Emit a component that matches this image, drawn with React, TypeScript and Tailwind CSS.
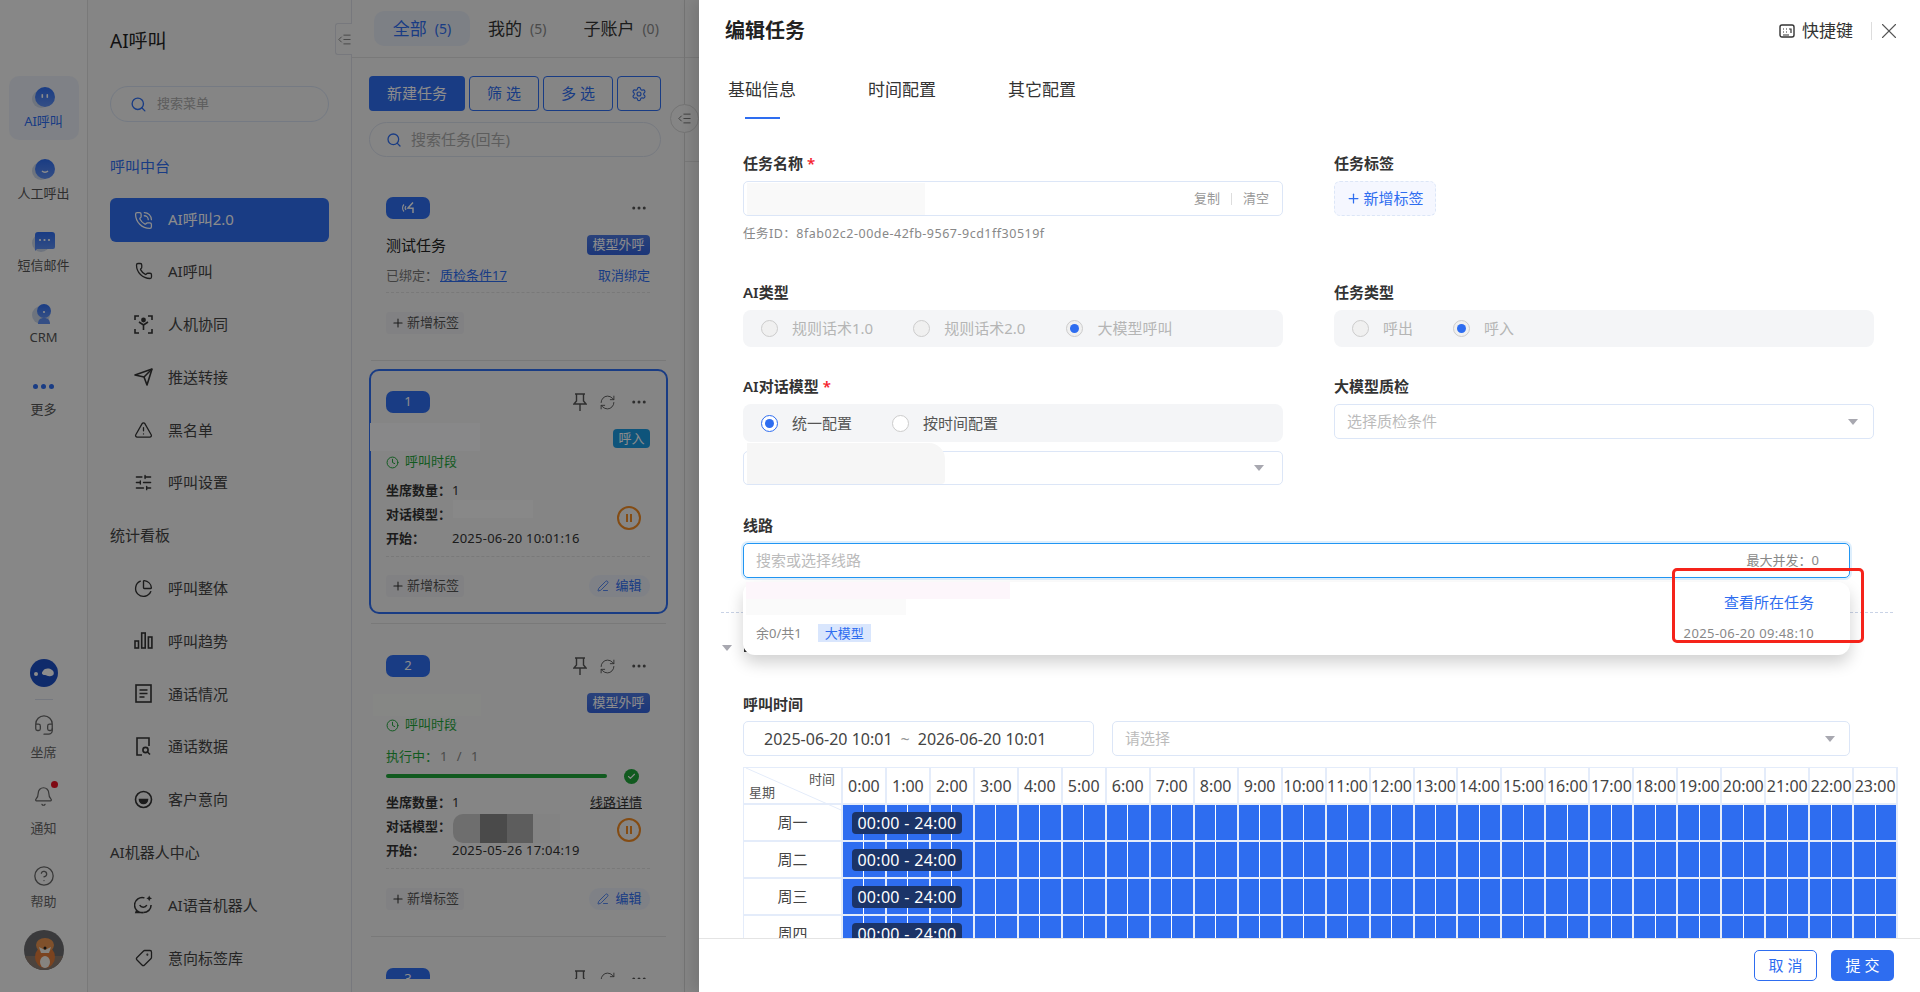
import type { ReactNode } from 'react';
import { Search, PhoneCall, Phone, TriangleAlert, SlidersHorizontal, ChartPie, Tag, Settings, RefreshCw, Ellipsis, Plus, Clock, PenLine, Check, X, Headset, Bell, CircleHelp, IndentDecrease } from 'lucide-react';

const blue = 'bg-[#2e6df0]';

function FaceIcon({ kind }: { kind: string }) {
  return (
    <svg width="24" height="24" viewBox="0 0 24 24">
      <defs>
        <linearGradient id={'g' + kind} x1="0" y1="0" x2="0" y2="1">
          <stop offset="0" stopColor="#2e6df0" />
          <stop offset="1" stopColor="#5f8ff2" />
        </linearGradient>
      </defs>
      <circle cx="9" cy="13" r="9" fill="#c9d3e6" />
      {kind === 'msg' ? (
        <>
          <path d="M3 5a3 3 0 0 1 3-3h14a3 3 0 0 1 3 3v12a2 2 0 0 1-2 2H5l-2 2z" fill={'url(#g' + kind + ')'} />
          <circle cx="8" cy="10" r="1.1" fill="#fff" />
          <circle cx="12.5" cy="10" r="1.1" fill="#fff" />
          <circle cx="17" cy="10" r="1.1" fill="#fff" />
        </>
      ) : kind === 'crm' ? (
        <>
          <circle cx="12" cy="9" r="7" fill={'url(#g' + kind + ')'} />
          <path d="M6 22c0-4 2-6 6-6s6 2 6 6z" fill="#5f8ff2" />
          <circle cx="12" cy="10" r="1.1" fill="#fff" />
        </>
      ) : (
        <>
          <circle cx="13" cy="11" r="10" fill={'url(#g' + kind + ')'} />
          {kind === 'ai' ? (
            <>
              <rect x="9.5" y="8" width="1.6" height="4" rx="0.8" fill="#fff" />
              <rect x="14.5" y="8" width="1.6" height="4" rx="0.8" fill="#fff" />
            </>
          ) : (
            <path d="M10 13c1.5 1.6 4.5 1.6 6 0" stroke="#fff" strokeWidth="1.4" fill="none" />
          )}
        </>
      )}
    </svg>
  );
}

function RailItem({ kind, label, active }: { kind: string; label: string; active?: boolean }) {
  return (
    <div className={'w-[70px] h-[64px] rounded-[10px] flex flex-col items-center pt-[10px] ' + (active ? 'bg-[#e8ecf4]' : '')}>
      {kind === 'more' ? (
        <div className="h-[24px] flex items-center gap-[3px]">
          <span className="w-[5px] h-[5px] rounded-full bg-[#2e6df0]" />
          <span className="w-[5px] h-[5px] rounded-full bg-[#2e6df0]" />
          <span className="w-[5px] h-[5px] rounded-full bg-[#2e6df0]" />
        </div>
      ) : (
        <FaceIcon kind={kind} />
      )}
      <span className={'mt-[1px] text-[13px] leading-[20px] ' + (active ? 'text-[#2e6df0]' : 'text-[#555]')}>{label}</span>
    </div>
  );
}

function Rail() {
  return (
    <div className="w-[88px] shrink-0 h-full bg-[#f6f6f6] border-r border-[#dcdcdc] flex flex-col items-center justify-between pt-[76px] pb-[22px]">
      <div className="flex flex-col gap-[8px]">
        <RailItem kind="ai" label="AI呼叫" active />
        <RailItem kind="human" label="人工呼出" />
        <RailItem kind="msg" label="短信邮件" />
        <RailItem kind="crm" label="CRM" />
        <RailItem kind="more" label="更多" />
      </div>
      <div className="flex flex-col items-center text-[13px] leading-[16px] text-[#666]">
        <svg width="28" height="28" viewBox="0 0 28 28">
          <circle cx="14" cy="14" r="14" fill="#1d4fc4" />
          <path d="M13 12c2-3 6-3 9-1 3 2 2 6-1 6-3 1-4-1-6-1-3 0-4-2-2-4z" fill="#fff" />
          <circle cx="6" cy="15" r="2" fill="#fff" />
        </svg>
        <div className="mt-[12px] w-[18px] h-px bg-[#d5dbe8]" />
        <Headset size={22} strokeWidth={1.4} className="mt-[14px] text-[#666]" />
        <span className="mt-[8px]">坐席</span>
        <div className="relative mt-[26px]">
          <Bell size={21} strokeWidth={1.4} className="text-[#666]" />
          <span className="absolute -top-[5px] -right-[4px] w-[7px] h-[7px] rounded-full bg-[#e81123]" />
        </div>
        <span className="mt-[13px]">通知</span>
        <CircleHelp size={22} strokeWidth={1.4} className="mt-[29px] text-[#666]" />
        <span className="mt-[6px]">帮助</span>
        <svg width="40" height="40" viewBox="0 0 40 40" className="mt-[21px]">
          <clipPath id="av"><circle cx="20" cy="20" r="20" /></clipPath>
          <g clipPath="url(#av)">
            <rect width="40" height="40" fill="#6b6b6e" />
            <rect y="26" width="40" height="14" fill="#8a7a70" />
            <ellipse cx="21" cy="27" rx="10" ry="11" fill="#e07a3a" />
            <ellipse cx="21" cy="15" rx="9" ry="7" fill="#e8934f" />
            <path d="M15 17l6 3 6-3-2 6h-8z" fill="#f5f1ea" />
            <ellipse cx="21" cy="32" rx="5" ry="6" fill="#f5f1ea" />
            <circle cx="21" cy="18" r="1.5" fill="#222" />
          </g>
        </svg>
      </div>
    </div>
  );
}

function ScanUser() {
  return (
    <svg width="19" height="19" viewBox="0 0 19 19" fill="none" stroke="currentColor" strokeWidth="1.6">
      <path d="M1 5V1h4M14 1h4v4M18 14v4h-4M5 18H1v-4" />
      <circle cx="9.5" cy="5" r="1.6" fill="currentColor" />
      <path d="M5 7l4.5 3L14 7M9.5 10v5" />
    </svg>
  );
}

function SendIcon() {
  return (
    <svg width="19" height="19" viewBox="0 0 19 19" fill="none" stroke="currentColor" strokeWidth="1.6" strokeLinejoin="round">
      <path d="M1 8l17-6-5 16-3-8z" />
      <path d="M10 10l8-8" />
    </svg>
  );
}

function BarsIcon() {
  return (
    <svg width="19" height="19" viewBox="0 0 19 19" fill="none" stroke="currentColor" strokeWidth="1.6">
      <rect x="1" y="10" width="3.5" height="7" />
      <rect x="7.7" y="2" width="3.5" height="15" />
      <rect x="14.4" y="6" width="3.5" height="11" />
    </svg>
  );
}

function DocIcon() {
  return (
    <svg width="19" height="19" viewBox="0 0 19 19" fill="none" stroke="currentColor" strokeWidth="1.6">
      <rect x="2" y="1" width="15" height="17" />
      <path d="M5.5 6h8M5.5 9.5h8M5.5 13h5" />
    </svg>
  );
}

function DocSearchIcon() {
  return (
    <svg width="19" height="19" viewBox="0 0 19 19" fill="none" stroke="currentColor" strokeWidth="1.6">
      <path d="M8 18H3V1h12v8" />
      <circle cx="11.5" cy="13" r="2.6" />
      <path d="M13.5 15l2.5 2.5" />
    </svg>
  );
}

function IntentIcon() {
  return (
    <svg width="19" height="19" viewBox="0 0 19 19" fill="none" stroke="currentColor" strokeWidth="1.6">
      <circle cx="9.5" cy="9.5" r="8" />
      <path d="M5.5 9.5h8a4 4 0 0 1-8 0z" fill="currentColor" />
    </svg>
  );
}

function BotChatIcon() {
  return (
    <svg width="20" height="20" viewBox="0 0 20 20" fill="none" stroke="currentColor" strokeWidth="1.6">
      <path d="M11 2.5A8 8 0 1 0 10 18H2l1-3" />
      <path d="M18 10a8 8 0 0 1-8 8" />
      <path d="M6 10c1.5 3 6 3 7.5 0" />
      <path d="M16 0l1 2 2 1-2 1-1 2-1-2-2-1 2-1z" fill="currentColor" stroke="none" />
    </svg>
  );
}

function PinIcon() {
  return (
    <svg width="14" height="19" viewBox="0 0 14 19" fill="none" stroke="currentColor" strokeWidth="1.4">
      <path d="M2 1h10M3.5 1v7L1 11h12l-2.5-3V1M7 11v7" />
    </svg>
  );
}

function SignalIcon() {
  return (
    <svg width="14" height="14" viewBox="0 0 14 14" fill="none" stroke="#fff" strokeWidth="1.1">
      <path d="M3 3.5a5 5 0 0 0 0 7M5 5a3 3 0 0 0 0 4" />
      <path d="M12 1.5L7 7l5 .2V12" strokeWidth="1.5" />
    </svg>
  );
}

function MenuRow({ icon, label }: { icon: ReactNode; label: string }) {
  return (
    <div className="h-[52.8px] flex items-center pl-[24px]">
      <span className="w-[19px] h-[20px] flex items-center justify-center text-[#333]">{icon}</span>
      <span className="ml-[15px] text-[15px] text-[#444]">{label}</span>
    </div>
  );
}

function MenuPanel() {
  return (
    <div className="relative w-[264px] shrink-0 h-full bg-[#f2f2f2] border-r border-[#d9dbe3] pl-[22px] pr-[22px] pt-[27px]">
      <div className="text-[19px] leading-[28px] text-[#222]">AI呼叫</div>
      <div className="mt-[31px] h-[36px] rounded-full border border-[#d5dfef] flex items-center pl-[19px] gap-[10px]">
        <Search size={17} strokeWidth={1.9} className="text-[#2e6df0]" />
        <span className="text-[13px] text-[#aaa]">搜索菜单</span>
      </div>
      <div className="mt-[34px] text-[15px] leading-[20px] text-[#2e6df0]">呼叫中台</div>
      <div className={'mt-[22px] h-[44px] rounded-[6px] flex items-center pl-[24px] text-white ' + blue}>
        <PhoneCall size={19} strokeWidth={1.6} />
        <span className="ml-[15px] mb-[2px] text-[15px]">AI呼叫2.0</span>
      </div>
      <div className="mt-[3px]">
        <MenuRow icon={<Phone size={18} strokeWidth={1.7} />} label="AI呼叫" />
        <MenuRow icon={<ScanUser />} label="人机协同" />
        <MenuRow icon={<SendIcon />} label="推送转接" />
        <MenuRow icon={<TriangleAlert size={20} strokeWidth={1.6} />} label="黑名单" />
        <MenuRow icon={<SlidersHorizontal size={19} strokeWidth={1.7} />} label="呼叫设置" />
        <div className="h-[52.8px] flex items-center text-[15px] text-[#444]">统计看板</div>
        <MenuRow icon={<ChartPie size={19} strokeWidth={1.7} />} label="呼叫整体" />
        <MenuRow icon={<BarsIcon />} label="呼叫趋势" />
        <MenuRow icon={<DocIcon />} label="通话情况" />
        <MenuRow icon={<DocSearchIcon />} label="通话数据" />
        <MenuRow icon={<IntentIcon />} label="客户意向" />
        <div className="h-[52.8px] flex items-center text-[15px] text-[#444]">AI机器人中心</div>
        <MenuRow icon={<BotChatIcon />} label="AI语音机器人" />
        <MenuRow icon={<Tag size={18} strokeWidth={1.7} className="rotate-90" />} label="意向标签库" />
      </div>
      <div className="absolute right-[-1px] top-[23px] w-[17px] h-[32px] bg-[#f2f2f2] border border-r-0 border-[#d9dbe3] rounded-l-[3px] flex items-center justify-center text-[#777]">
        <IndentDecrease size={15} strokeWidth={1.4} />
      </div>
    </div>
  );
}

function CardTop({ badge, full }: { badge: ReactNode; full?: boolean }) {
  return (
    <div className="flex items-center justify-between h-[22px]">
      <div className={'w-[44px] h-[22px] rounded-[7px] flex items-center justify-center text-white text-[13px] ' + blue}>{badge}</div>
      <div className="flex items-center gap-[12px] pr-[2px] text-[#555]">
        {full && <PinIcon />}
        {full && <RefreshCw size={17} strokeWidth={1.3} />}
        <Ellipsis size={18} strokeWidth={2} className="ml-[2px]" />
      </div>
    </div>
  );
}

function AddTag() {
  return (
    <div className="h-[22px] w-[78px] rounded-[3px] bg-[#ececee] flex items-center justify-center gap-[2px] text-[13px] text-[#555]">
      <Plus size={14} strokeWidth={1.8} className="text-[#333]" />
      <span>新增标签</span>
    </div>
  );
}

function CardFoot({ edit }: { edit?: boolean }) {
  return (
    <div className="flex items-center justify-between">
      <AddTag />
      {edit && (
        <div className="h-[22px] w-[61px] rounded-full bg-[#e8ecf5] flex items-center justify-center gap-[6px] text-[13px] text-[#2e6df0]">
          <PenLine size={12} strokeWidth={1.6} />
          <span>编辑</span>
        </div>
      )}
    </div>
  );
}

function InfoRows({ date, right }: { date: string; right?: boolean }) {
  return (
    <div className="relative text-[13px] leading-[24px] text-[#333]">
      <div className="flex justify-between pr-[8px]">
        <div className="flex"><span className="w-[66px] font-semibold">坐席数量：</span><span>1</span></div>
        {right && <span className="underline">线路详情</span>}
      </div>
      <div className="flex"><span className="w-[66px] font-semibold">对话模型：</span></div>
      <div className="flex"><span className="w-[66px] font-semibold">开始：</span><span className="tracking-[0.25px]">{date}</span></div>
      <div className="absolute right-[9px] top-[28px] w-[24px] h-[24px] rounded-full border-2 border-[#f08a24] flex items-center justify-center gap-[2px]">
        <span className="w-[2px] h-[8px] bg-[#f08a24]" />
        <span className="w-[2px] h-[8px] bg-[#f08a24]" />
      </div>
    </div>
  );
}

function TimeSlot() {
  return (
    <div className="flex items-center gap-[6px] h-[18px] text-[13px] text-[#1fa53a]">
      <Clock size={13} strokeWidth={1.8} />
      <span>呼叫时段</span>
    </div>
  );
}

function TaskTag({ label, cyan }: { label: string; cyan?: boolean }) {
  return (
    <div className={'rounded-[4px] flex items-center justify-center text-white text-[13px] ' + (cyan ? 'w-[37px] h-[19px] bg-[#1a9ae0]' : 'w-[63px] h-[20px] bg-gradient-to-b from-[#4c78e0] to-[#3463dc]')}>{label}</div>
  );
}

function Dashed({ className }: { className: string }) {
  return <div className={'border-t border-dashed border-[#dcdcdc] ' + className} />;
}

function TaskColumn() {
  return (
    <div className="relative w-[333px] shrink-0 h-full flex flex-col bg-[#f2f2f2] border-r border-[#d4d4d4]">
      <div className="h-[58px] shrink-0 border-b border-[#dcdcdc] pl-[22px] pt-[11px] flex items-start">
        <div className="w-[96px] h-[35px] rounded-[10px] bg-[#e4e9f3] flex items-center justify-center gap-[8px] text-[#2e6df0]">
          <span className="text-[17px]">全部</span><span className="text-[14px]">(5)</span>
        </div>
        <div className="h-[35px] flex items-center pl-[18px] gap-[8px] text-[#333]">
          <span className="text-[17px]">我的</span><span className="text-[14px] text-[#888]">(5)</span>
        </div>
        <div className="h-[35px] flex items-center pl-[37px] gap-[8px] text-[#333]">
          <span className="text-[17px]">子账户</span><span className="text-[14px] text-[#888]">(0)</span>
        </div>
      </div>
      <div className="h-[921px] overflow-hidden pl-[17px] relative">
        <div className="mt-[18px] flex gap-[4px] text-[15px]">
          <div className={'w-[96px] h-[35px] rounded-[4px] flex items-center justify-center text-white ' + blue}>新建任务</div>
          <div className="w-[70px] h-[35px] rounded-[4px] border border-[#2e6df0] flex items-center justify-center text-[#2e6df0]">筛 选</div>
          <div className="w-[70px] h-[35px] rounded-[4px] border border-[#2e6df0] flex items-center justify-center text-[#2e6df0]">多 选</div>
          <div className="w-[44px] h-[35px] rounded-[4px] border border-[#2e6df0] flex items-center justify-center text-[#2e6df0]"><Settings size={16} strokeWidth={1.7} /></div>
        </div>
        <div className="mt-[11px] w-[292px] h-[35px] rounded-full border border-[#d8deea] flex items-center pl-[16px] gap-[9px]">
          <Search size={16} strokeWidth={1.9} className="text-[#2e6df0]" />
          <span className="text-[15px] text-[#aaa]">搜索任务(回车)</span>
        </div>
        <div className="mt-[17px] w-[299px] border-2 border-transparent pl-[15px] pr-[16px] pt-[21px] pb-[15px]">
          <CardTop badge={<SignalIcon />} />
          <div className="mt-[16px] h-[20px] flex items-center justify-between">
            <span className="text-[15px] text-[#222]">测试任务</span>
            <TaskTag label="模型外呼" />
          </div>
          <div className="mt-[11px] h-[20px] flex items-center justify-between text-[13px]">
            <div><span className="text-[#777]">已绑定：</span><span className="ml-[2px] text-[#2e6df0] underline">质检条件17</span></div>
            <span className="text-[#2e6df0]">取消绑定</span>
          </div>
          <Dashed className="mt-[6px]" />
          <div className="mt-[19px]"><CardFoot /></div>
        </div>
        <div className="mt-[9px] ml-[2px] w-[295px] h-px bg-[#dcdcdc]" />
        <div className="relative mt-[8px] w-[299px] rounded-[10px] border-2 border-[#2e6df0] pl-[15px] pr-[16px] pt-[20px] pb-[15px]">
          <CardTop badge="1" full />
          <div className="mt-[16px] flex justify-end"><TaskTag label="呼入" cyan /></div>
          <div className="absolute -left-[1px] top-[52px] w-[110px] h-[28px] bg-[#f7f7fa]" />
          <div className="mt-[5px]"><TimeSlot /></div>
          <div className="mt-[7px]"><InfoRows date="2025-06-20 10:01:16" /></div>
          <div className="absolute left-[82px] top-[129px] w-[80px] h-[18px] bg-[#f8f8f8]" />
          <Dashed className="mt-[6px]" />
          <div className="mt-[18px]"><CardFoot edit /></div>
        </div>
        <div className="mt-[9px] ml-[2px] w-[295px] h-px bg-[#dcdcdc]" />
        <div className="relative mt-[8px] w-[299px] border-2 border-transparent pl-[15px] pr-[16px] pt-[21px] pb-[15px]">
          <CardTop badge="2" full />
          <div className="mt-[16px] flex justify-end"><TaskTag label="模型外呼" /></div>
          <div className="absolute left-[2px] top-[60px] w-[108px] h-[22px] bg-[#f4f6f3]" />
          <div className="mt-[3px]"><TimeSlot /></div>
          <div className="mt-[14px] h-[18px] flex items-center text-[13px] text-[#1fa53a]">执行中：<span className="ml-[2px] text-[#888] tracking-[3px]">1 / 1</span></div>
          <div className="mt-[2px] h-[16px] flex items-center">
            <div className="w-[221px] h-[4px] rounded-full bg-[#1fa53a]" />
            <div className="ml-[17px] w-[15px] h-[15px] rounded-full bg-[#1fa53a] flex items-center justify-center text-white"><Check size={9} strokeWidth={3} /></div>
          </div>
          <div className="mt-[6px]"><InfoRows date="2025-05-26 17:04:19" right /></div>
          <div className="absolute left-[82px] top-[180px] h-[29px] flex rounded-l-[10px] overflow-hidden">
            <span className="w-[27px] bg-[#c8c8c8]" />
            <span className="w-[27px] bg-[#888]" />
            <span className="w-[26px] bg-[#aaa]" />
            <span className="w-[27px] bg-[#eee]" />
          </div>
          <Dashed className="mt-[6px]" />
          <div className="mt-[19px]"><CardFoot edit /></div>
        </div>
        <div className="mt-[9px] ml-[2px] w-[295px] h-px bg-[#dcdcdc]" />
        <div className="mt-[8px] w-[299px] border-2 border-transparent pl-[15px] pr-[16px] pt-[21px]">
          <CardTop badge="3" full />
        </div>
      </div>
      <div className="absolute right-[-15px] top-[104px] w-[29px] h-[29px] rounded-full bg-[#f2f2f2] border border-[#d4d4d4] flex items-center justify-center text-[#666]">
        <IndentDecrease size={15} strokeWidth={1.4} />
      </div>
    </div>
  );
}

function Label({ text, star }: { text: string; star?: boolean }) {
  return (
    <div className="h-[20px] mb-[7px] pb-[2px] flex items-center text-[15px] font-semibold text-[#333]">
      {text}
      {star && <span className="ml-[4px] text-[#f5222d]">*</span>}
    </div>
  );
}

function Radio({ on, off, label, className }: { on?: boolean; off?: boolean; label: string; className?: string }) {
  return (
    <div className={'flex items-center gap-[14px] ' + (className || '')}>
      <span className={'w-[17px] h-[17px] rounded-full border-[1.5px] flex items-center justify-center ' + (off ? 'border-[#ccc] bg-[#f0f0f0]' : on ? 'border-[#2e6df0] bg-white' : 'border-[#ccc] bg-white')}>
        {on && <span className="w-[9px] h-[9px] rounded-full bg-[#2e6df0]" />}
      </span>
      <span className={off ? 'text-[#b5b5b5]' : 'text-[#555]'}>{label}</span>
    </div>
  );
}

function Caret() {
  return <span className="w-0 h-0 border-x-[5px] border-x-transparent border-t-[6px] border-t-[#a8a8b0]" />;
}

function Schedule() {
  const hours = Array.from({ length: 24 }, (_, i) => i);
  const rows = ['周一', '周二', '周三', '周四'];
  return (
    <div className="mt-[11px] w-[1155px] border-t border-l border-[#e4ecfa]">
      <div className="flex h-[37px]">
        <div className="relative w-[99px] border-r-2 border-b-2 border-[#e4ecfa] text-[13px] text-[#555]">
          <svg className="absolute left-0 top-0 overflow-visible" width="97" height="35"><line x1="2" y1="0" x2="97" y2="42" stroke="#e4ecfa" /></svg>
          <span className="absolute right-[6px] top-[2px]">时间</span>
          <span className="absolute left-[5px] bottom-[1px]">星期</span>
        </div>
        {hours.map(h => (
          <div key={h} className="w-[44px] border-r-2 border-b-2 border-[#e4ecfa] flex items-center justify-center text-[16px] text-[#444]">{h}:00</div>
        ))}
      </div>
      {rows.map(r => (
        <div key={r} className="relative flex h-[37px]">
          <div className="w-[99px] border-r-2 border-b-2 border-[#e4ecfa] flex items-center justify-center text-[15px] text-[#444]">{r}</div>
          {hours.map(h => (
            <div key={h} className="w-[44px] flex border-r-2 border-b-2 border-[#e4ecfa]">
              <div className="flex-1 bg-[#2e6df0] border-r border-white" />
              <div className="flex-1 bg-[#2e6df0]" />
            </div>
          ))}
          <div className="absolute left-[108px] top-[7px] w-[110px] h-[22px] rounded-[4px] bg-[#1b3468] flex items-center justify-center text-[16px] tracking-[0.3px] text-white">00:00 - 24:00</div>
        </div>
      ))}
    </div>
  );
}

function Drawer() {
  return (
    <div className="absolute right-0 top-0 bottom-0 w-[1221px] bg-white shadow-[-6px_0_14px_rgba(0,0,0,0.12)] flex flex-col">
      <div className="h-[939px] overflow-hidden border-b border-[#e4e4e4]">
        <div className="h-[62px] flex items-center justify-between pl-[26px] pr-[18px]">
          <span className="text-[20px] font-semibold text-[#222]">编辑任务</span>
          <div className="flex items-center text-[#333]">
            <svg width="16" height="16" viewBox="0 0 16 16" fill="none" stroke="currentColor" strokeWidth="1.4">
              <rect x="1" y="2" width="14" height="12" rx="2" />
              <path d="M4 6h1M7 6h1M10 6h2v4M4 9h1M7 9h1M4 12h6" strokeWidth="1.2" />
            </svg>
            <span className="ml-[7px] text-[17px]">快捷键</span>
            <span className="ml-[18px] w-px h-[18px] bg-[#ddd]" />
            <X size={26} strokeWidth={1} className="ml-[4px] text-[#555]" />
          </div>
        </div>
        <div className="mt-[16px] pl-[29px] flex gap-[72px] text-[17px] leading-[24px] text-[#333]">
          <div className="flex flex-col items-center">
            <span>基础信息</span>
            <span className="mt-[15px] w-[35px] h-[2px] bg-[#2e6df0]" />
          </div>
          <span>时间配置</span>
          <span>其它配置</span>
        </div>
        <div className="mt-[34px] pl-[44px]">
          <div className="grid grid-cols-[540px_540px] gap-x-[51px]">
            <div>
              <div className="h-[20px] mb-[8px] flex items-center text-[15px] font-semibold text-[#333]">任务名称<span className="ml-[4px] text-[#f5222d]">*</span></div>
              <div className="relative h-[35px] rounded-[5px] border border-[#dce6f7] flex items-center justify-end pr-[13px] text-[13px] text-[#999]">
                <div className="absolute left-[3px] top-[1px] w-[178px] h-[32px] bg-[#f9f9f9]" />
                复制<span className="mx-[11px] w-px h-[12px] bg-[#ddd]" />清空
              </div>
              <div className="mt-[9px] h-[18px] flex items-center text-[12.5px] text-[#888] tracking-[0.5px]">任务ID：8fab02c2-00de-42fb-9567-9cd1ff30519f</div>
            </div>
            <div>
              <div className="h-[20px] mb-[8px] flex items-center text-[15px] font-semibold text-[#333]">任务标签</div>
              <div className="w-[102px] h-[35px] rounded-[6px] border border-dashed border-[#dce6f7] bg-[#f5f7ff] flex items-center justify-center gap-[2px] text-[15px] text-[#2e6df0]">
                <Plus size={15} strokeWidth={2} />新增标签
              </div>
            </div>
            <div className="mt-[40px]">
              <Label text="AI类型" />
              <div className="h-[37px] rounded-[8px] bg-[#f4f5f7] flex items-center pl-[18px] text-[15px]">
                <Radio off label="规则话术1.0" />
                <Radio off label="规则话术2.0" className="ml-[40px]" />
                <Radio on off label="大模型呼叫" className="ml-[41px]" />
              </div>
            </div>
            <div className="mt-[40px]">
              <Label text="任务类型" />
              <div className="h-[37px] rounded-[8px] bg-[#f4f5f7] flex items-center pl-[18px] text-[15px]">
                <Radio off label="呼出" />
                <Radio on off label="呼入" className="ml-[40px]" />
              </div>
            </div>
            <div className="mt-[30px]">
              <Label text="AI对话模型" star />
              <div className="h-[38px] rounded-[8px] bg-[#f4f5f7] flex items-center pl-[18px] text-[15px]">
                <Radio on label="统一配置" />
                <Radio label="按时间配置" className="ml-[40px]" />
              </div>
              <div className="relative mt-[9px] h-[34px] rounded-[5px] border border-[#dce6f7] flex items-center justify-end pr-[18px]">
                <div className="absolute left-[3px] -top-[9px] w-[198px] h-[41px] rounded-tr-[16px] rounded-br-[4px] bg-[#f6f6f6]" />
                <Caret />
              </div>
            </div>
            <div className="mt-[30px]">
              <Label text="大模型质检" />
              <div className="h-[35px] rounded-[5px] border border-[#dce6f7] flex items-center justify-between pl-[12px] pr-[15px] text-[15px] text-[#bbb]">
                选择质检条件<Caret />
              </div>
            </div>
          </div>
          <div className="relative mt-[30px] w-[1107px]">
            <div className="h-[20px] mb-[8px] flex items-center text-[15px] font-semibold text-[#333]">线路</div>
            <div className="h-[35px] rounded-[5px] border border-[#2196f3] shadow-[0_0_0_2px_rgba(33,150,243,0.15)] flex items-center justify-between pl-[12px] pr-[30px]">
              <span className="text-[15px] text-[#bbb]">搜索或选择线路</span>
              <span className="text-[13px] text-[#888]">最大并发：0</span>
            </div>
            <div className="absolute left-0 right-0 top-[67px] h-[73px] z-10 rounded-[12px] bg-white shadow-[0_8px_16px_rgba(0,0,0,0.18)] flex flex-col justify-between pl-[13px] pr-[36px] pb-[12px] pt-[11px]">
              <div className="absolute left-[3px] top-0 w-[264px] h-[17px] bg-[#fdf6fb]" />
              <div className="absolute left-[3px] top-[17px] w-[160px] h-[16px] bg-[#fafafa]" />
              <div className="text-right text-[15px] leading-[18px] text-[#2e6df0]">查看所在任务</div>
              <div className="flex items-center justify-between text-[13px] text-[#888]">
                <div className="flex items-center gap-[16px]">
                  <span>余0/共1</span>
                  <span className="w-[53px] h-[18px] bg-[#d9e6fd] flex items-center justify-center text-[#2e6df0]">大模型</span>
                </div>
                <span className="tracking-[0.4px]">2025-06-20 09:48:10</span>
              </div>
            </div>
          </div>
          <div className="mt-[34px] -ml-[22px] w-[1172px] border-t border-dashed border-[#c9d3e6]" />
          <div className="mt-[30px] -ml-[21px] h-[10px] flex items-center">
            <Caret />
            <span className="ml-[12px] w-[8px] h-[8px] bg-[#333]" />
          </div>
          <div className="mt-[41px] h-[20px] mb-[7px] flex items-center text-[15px] font-semibold text-[#333]">呼叫时间</div>
          <div className="flex gap-[18px] w-[1107px]">
            <div className="w-[351px] h-[35px] rounded-[5px] border border-[#dce6f7] flex items-center pl-[20px] text-[16px] text-[#444]">
              2025-06-20 10:01<span className="mx-[8px] text-[#999]">~</span>2026-06-20 10:01
            </div>
            <div className="w-[738px] h-[35px] rounded-[5px] border border-[#dce6f7] flex items-center justify-between pl-[12px] pr-[14px] text-[15px] text-[#bbb]">
              请选择<Caret />
            </div>
          </div>
          <Schedule />
        </div>
      </div>
      <div className="flex-1 flex items-start justify-end gap-[14px] pt-[11px] pr-[26px] text-[15px]">
        <div className="w-[63px] h-[31px] rounded-[5px] border border-[#2e6df0] flex items-center justify-center text-[#2e6df0]">取 消</div>
        <div className={'w-[63px] h-[31px] rounded-[5px] flex items-center justify-center text-white ' + blue}>提 交</div>
      </div>
      <div className="absolute left-[973px] top-[568px] w-[192px] h-[75px] rounded-[5px] border-[3px] border-[#f5231a] z-20" />
    </div>
  );
}

export default function App() {
  return (
    <div className="relative flex h-screen w-full overflow-hidden bg-[#f2f2f2] font-['Noto_Sans','Noto_Sans_CJK_SC',sans-serif]">
      <Rail />
      <MenuPanel />
      <TaskColumn />
      <div className="flex-1">
        <div className="h-[58px] border-b border-[#dcdcdc]" />
        <div className="h-[104px] border-b border-[#dcdcdc]" />
      </div>
      <div className="absolute inset-0 bg-black/45" />
      <Drawer />
    </div>
  );
}
